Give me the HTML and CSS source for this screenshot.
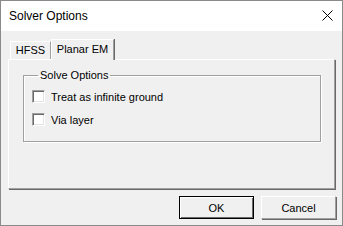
FILE: index.html
```html
<!DOCTYPE html>
<html lang="en">
<head>
    <meta charset="UTF-8">
    <title>Solver Options</title>
    <link rel="stylesheet" href="styles.css">
</head>
<body>
    <div class="window">
        <div class="titlebar">
            <span class="title">Solver Options</span>
            <svg class="close" width="11" height="11" viewBox="0 0 11 11">
                <path d="M0.5 0.5 L10.5 10.5 M10.5 0.5 L0.5 10.5" stroke="#000" stroke-width="1" fill="none"/>
            </svg>
        </div>
        <div class="content">
            <div class="tabs">
                <div class="tab">HFSS</div>
                <div class="tab active">Planar EM</div>
            </div>
            <div class="panel">
                <fieldset class="group">
                    <legend>Solve Options</legend>
                    <label class="check"><span class="box"></span>Treat as infinite ground</label>
                    <label class="check"><span class="box"></span>Via layer</label>
                </fieldset>
            </div>
            <div class="buttons">
                <button class="btn default">OK</button>
                <button class="btn">Cancel</button>
            </div>
        </div>
    </div>
</body>
</html>
```

FILE: styles.css
```css
* {
    margin: 0;
    padding: 0;
    box-sizing: border-box;
}

body {
    font-family: 'Liberation Sans', Arial, sans-serif;
    font-size: 11px;
    color: #000;
    background: #fff;
}

.window {
    width: 343px;
    height: 226px;
    border: 1px solid #8a8a8a;
    background: #f0f0f0;
    display: flex;
    flex-direction: column;
}

.titlebar {
    height: 30px;
    background: #fff;
    display: flex;
    align-items: center;
    justify-content: space-between;
    padding: 0 9px 0 8px;
}

.title {
    font-size: 12px;
}

.close {
    display: block;
    margin-bottom: 1px;
}

.content {
    flex: 1;
    padding: 8px 6px 0 7px;
    display: flex;
    flex-direction: column;
}

/* tabs */
.tabs {
    display: flex;
    align-items: flex-end;
    height: 20px;
    padding-left: 2px;
    position: relative;
    z-index: 1;
}

.tab {
    height: 18px;
    line-height: 17px;
    white-space: nowrap;
    text-align: center;
    border-top: 1px solid #fff;
    border-left: 1px solid #fff;
    border-right: 1px solid #a0a0a0;
    box-shadow: 1px 0 0 #696969;
    width: 41px;
}

.tab.active {
    height: 21px;
    margin-bottom: -1px;
    width: 63px;
    line-height: 18px;
    background: #f0f0f0;
}

.panel {
    height: 130px;
    border-top: 1px solid #fff;
    border-left: 1px solid #fff;
    border-right: 1px solid #a0a0a0;
    border-bottom: 1px solid #a0a0a0;
    box-shadow: 1px 1px 0 #696969;
    margin-right: 1px;
    padding: 9px 13px 0 14px;
}

/* group box */
.group {
    border: 1px solid #a0a0a0;
    box-shadow: inset 1px 1px 0 #fff, 1px 1px 0 #fff;
    height: 73px;
    padding: 8px 0 0 8px;
}

.group legend {
    margin-left: 6px;
    padding: 0 2px;
    line-height: 13px;
}

.check {
    display: flex;
    align-items: center;
    height: 13px;
    margin-bottom: 10px;
}

.box {
    width: 13px;
    height: 13px;
    margin-right: 6px;
    background: #fff;
    border-top: 1px solid #a0a0a0;
    border-left: 1px solid #a0a0a0;
    border-right: 1px solid #fff;
    border-bottom: 1px solid #fff;
    box-shadow: inset 1px 1px 0 #696969, inset -1px -1px 0 #e3e3e3;
}

/* buttons */
.buttons {
    display: flex;
    justify-content: flex-end;
    gap: 7px;
    margin-top: 7px;
}

.btn {
    width: 75px;
    height: 23px;
    font-family: 'Liberation Sans', Arial, sans-serif;
    font-size: 11px;
    background: #f0f0f0;
    border-top: 1px solid #fff;
    border-left: 1px solid #fff;
    border-right: 1px solid #a0a0a0;
    border-bottom: 1px solid #a0a0a0;
    box-shadow: 1px 1px 0 #696969;
}

.btn.default {
    border: 1px solid #000;
    box-shadow: inset 1px 1px 0 #fff, inset -1px -1px 0 #696969;
}
```
